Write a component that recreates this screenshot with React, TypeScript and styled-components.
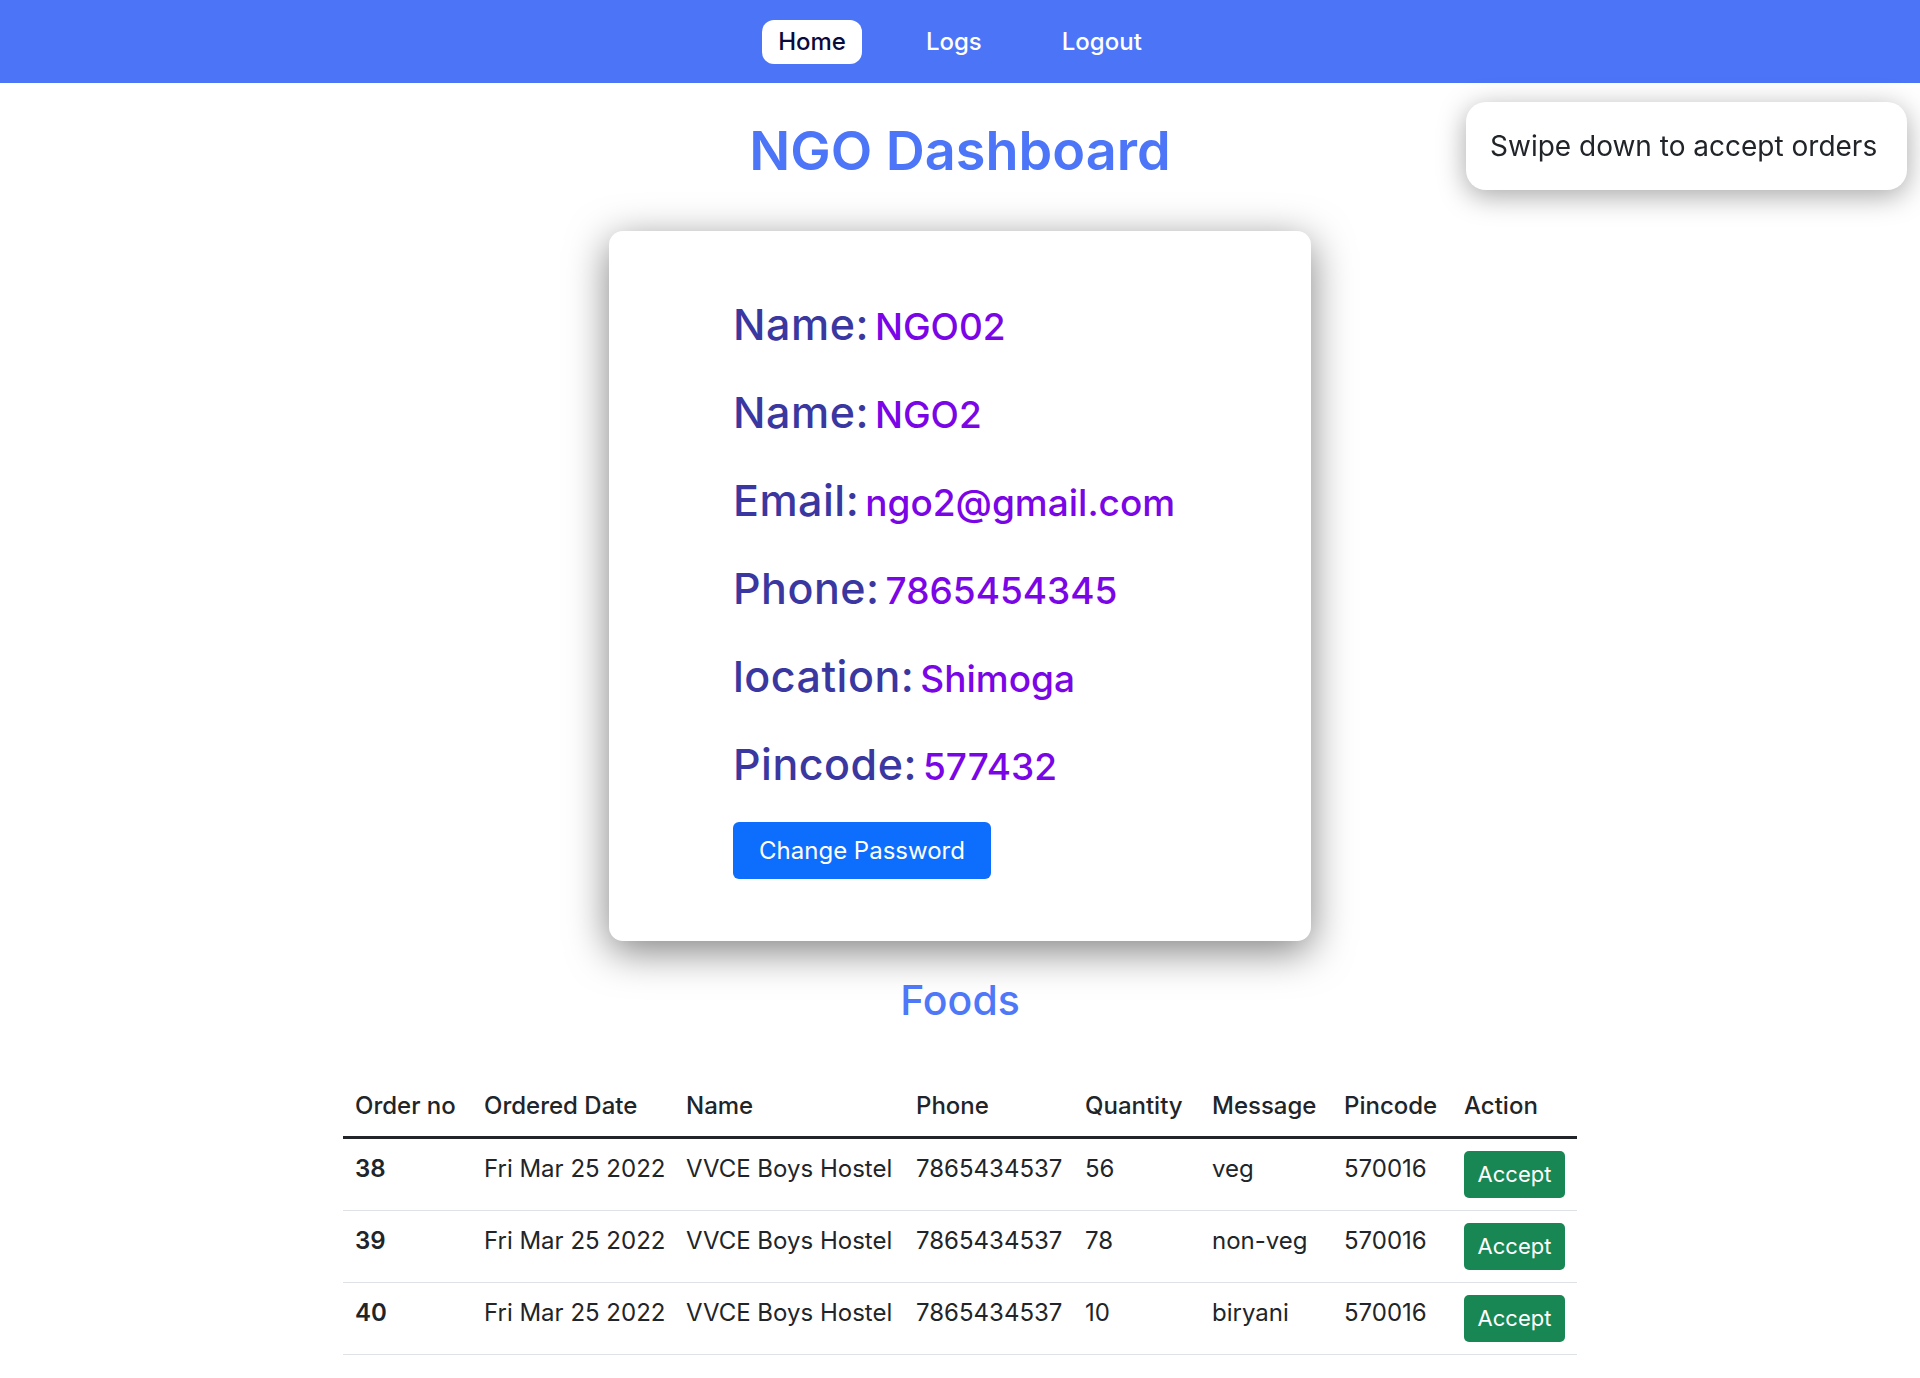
import React from 'react';
import styled, { createGlobalStyle } from 'styled-components';

const GlobalStyle = createGlobalStyle`
  * { box-sizing: border-box; }
  body {
    margin: 0;
    background: #ffffff;
    font-family: Inter, "DejaVu Sans", sans-serif;
    color: #212529;
  }
`;

const NavBar = styled.nav`
  height: 83px;
  background: #4b74f7;
  display: flex;
  align-items: center;
  justify-content: center;
  gap: 48px;
`;

const NavLink = styled.a<{ $active?: boolean }>`
  height: 44px;
  padding: 0 16px;
  display: flex;
  align-items: center;
  border-radius: 12px;
  font-size: 24px;
  font-weight: 500;
  text-decoration: none;
  cursor: pointer;
  background: ${(p) => (p.$active ? '#ffffff' : 'transparent')};
  color: ${(p) => (p.$active ? '#0a0a3c' : '#ffffff')};
`;

const Toast = styled.div`
  position: fixed;
  top: 102px;
  right: 13px;
  width: 441px;
  height: 88px;
  padding: 0 24px;
  display: flex;
  align-items: center;
  background: #ffffff;
  border-radius: 20px;
  box-shadow: 0 6px 28px rgba(0, 0, 0, 0.35);
  font-size: 28px;
  font-weight: 400;
  white-space: nowrap;
  color: #212529;
`;

const Main = styled.main`
  display: flex;
  flex-direction: column;
  align-items: center;
`;

const Title = styled.h1`
  margin: 36px 0 0;
  font-size: 54px;
  line-height: 1.2;
  font-weight: 600;
  color: #4c75f7;
`;

const Card = styled.section`
  width: 702px;
  margin-top: 47px;
  padding: 67px 0 62px 124px;
  background: #ffffff;
  border-radius: 14px;
  box-shadow: 0 10px 40px rgba(0, 0, 0, 0.5);
  display: flex;
  flex-direction: column;
  align-items: flex-start;
`;

const InfoList = styled.div`
  display: flex;
  flex-direction: column;
  gap: 36px;
`;

const InfoRow = styled.div`
  height: 52px;
  display: flex;
  align-items: baseline;
  gap: 6px;
  line-height: 52px;
`;

const Label = styled.span`
  font-size: 43px;
  font-weight: 500;
  letter-spacing: 0.5px;
  color: #3b37a0;
`;

const Value = styled.span`
  font-size: 37px;
  font-weight: 500;
  color: #7a05e6;
`;

const PrimaryButton = styled.button`
  margin-top: 32px;
  height: 57px;
  width: 258px;
  border: none;
  border-radius: 6px;
  background: #0d6efd;
  color: #ffffff;
  font-family: inherit;
  font-size: 24px;
  font-weight: 400;
  cursor: pointer;
`;

const SectionTitle = styled.h2`
  margin: 35px 0 0;
  font-size: 41px;
  line-height: 1.2;
  font-weight: 500;
  color: #4e78f8;
`;

const Table = styled.table`
  margin: 51px 0 24px;
  width: 1234px;
  table-layout: fixed;
  border-collapse: collapse;
  font-size: 24px;
  line-height: 36px;
  color: #212529;
`;

const HeadCell = styled.th`
  padding: 12px;
  text-align: left;
  font-weight: 500;
  border-bottom: 3px solid #212529;
`;

const Cell = styled.td<{ $strong?: boolean }>`
  padding: 12px;
  vertical-align: top;
  font-weight: ${(p) => (p.$strong ? 600 : 400)};
  border-bottom: 1px solid #dee2e6;
  white-space: nowrap;
`;

const AcceptButton = styled.button`
  width: 101px;
  height: 47px;
  border: none;
  border-radius: 5px;
  background: #198754;
  color: #ffffff;
  font-family: inherit;
  font-size: 22px;
  cursor: pointer;
`;

interface Order {
  id: number;
  date: string;
  name: string;
  phone: string;
  quantity: number;
  message: string;
  pincode: string;
}

const orders: Order[] = [
  { id: 38, date: 'Fri Mar 25 2022', name: 'VVCE Boys Hostel', phone: '7865434537', quantity: 56, message: 'veg', pincode: '570016' },
  { id: 39, date: 'Fri Mar 25 2022', name: 'VVCE Boys Hostel', phone: '7865434537', quantity: 78, message: 'non-veg', pincode: '570016' },
  { id: 40, date: 'Fri Mar 25 2022', name: 'VVCE Boys Hostel', phone: '7865434537', quantity: 10, message: 'biryani', pincode: '570016' },
];

const profile: [string, string][] = [
  ['Name:', 'NGO02'],
  ['Name:', 'NGO2'],
  ['Email:', 'ngo2@gmail.com'],
  ['Phone:', '7865454345'],
  ['location:', 'Shimoga'],
  ['Pincode:', '577432'],
];

const columns: [string, number][] = [
  ['Order no', 129],
  ['Ordered Date', 202],
  ['Name', 230],
  ['Phone', 169],
  ['Quantity', 127],
  ['Message', 132],
  ['Pincode', 120],
  ['Action', 125],
];

export default function App() {
  return (
    <>
      <GlobalStyle />
      <NavBar>
        <NavLink $active>Home</NavLink>
        <NavLink>Logs</NavLink>
        <NavLink>Logout</NavLink>
      </NavBar>
      <Toast>Swipe down to accept orders</Toast>
      <Main>
        <Title>NGO Dashboard</Title>
        <Card>
          <InfoList>
            {profile.map(([label, value], i) => (
              <InfoRow key={i}>
                <Label>{label}</Label>
                <Value>{value}</Value>
              </InfoRow>
            ))}
          </InfoList>
          <PrimaryButton>Change Password</PrimaryButton>
        </Card>
        <SectionTitle>Foods</SectionTitle>
        <Table>
          <colgroup>
            {columns.map(([name, width]) => (
              <col key={name} style={{ width }} />
            ))}
          </colgroup>
          <thead>
            <tr>
              {columns.map(([name]) => (
                <HeadCell key={name}>{name}</HeadCell>
              ))}
            </tr>
          </thead>
          <tbody>
            {orders.map((o) => (
              <tr key={o.id}>
                <Cell $strong>{o.id}</Cell>
                <Cell>{o.date}</Cell>
                <Cell>{o.name}</Cell>
                <Cell>{o.phone}</Cell>
                <Cell>{o.quantity}</Cell>
                <Cell>{o.message}</Cell>
                <Cell>{o.pincode}</Cell>
                <Cell>
                  <AcceptButton>Accept</AcceptButton>
                </Cell>
              </tr>
            ))}
          </tbody>
        </Table>
      </Main>
    </>
  );
}
